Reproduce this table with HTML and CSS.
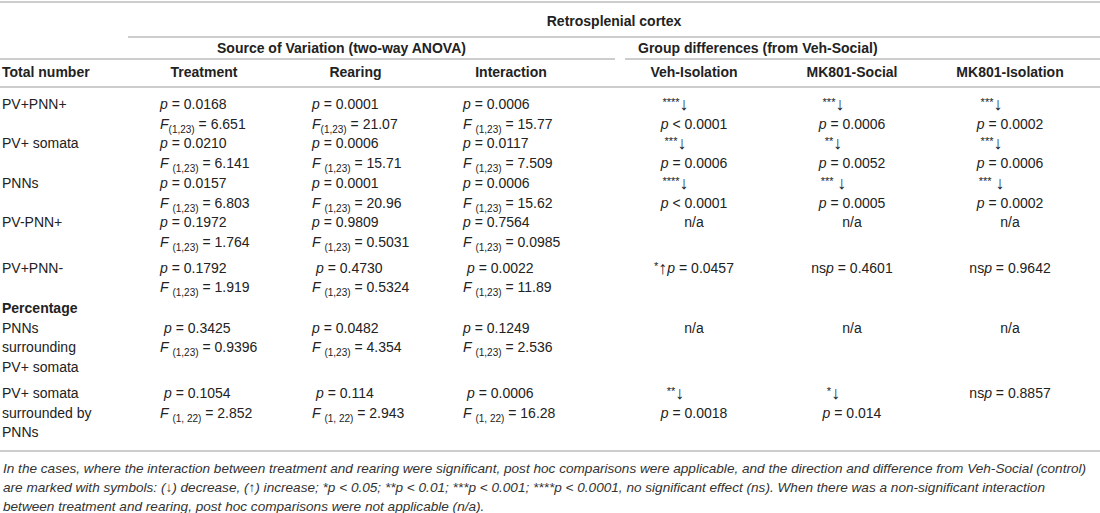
FILE: index.html
```html
<!DOCTYPE html>
<html lang="en">
<head>
<meta charset="utf-8">
<title>Retrosplenial cortex</title>
<link rel="stylesheet" href="styles.css">
</head>
<body>
<div class="page">
<table class="stats">
  <colgroup>
    <col class="c-label"><col class="c-treat"><col class="c-rear"><col class="c-inter">
    <col class="c-veh"><col class="c-mks"><col class="c-mki">
  </colgroup>
  <thead>
    <tr class="h1">
      <th></th>
      <th colspan="6" class="region">Retrosplenial cortex</th>
    </tr>
    <tr class="h2">
      <th class="rule-cell"></th>
      <th colspan="3" class="grp-cell"><div class="grp grp-src">Source of Variation (two-way ANOVA)</div></th>
      <th colspan="3" class="grp-cell"><div class="grp grp-diff">Group differences (from Veh-Social)</div></th>
    </tr>
    <tr class="h3">
      <th class="lab">Total number</th>
      <th>Treatment</th>
      <th>Rearing</th>
      <th class="inter">Interaction</th>
      <th>Veh-Isolation</th>
      <th>MK801-Social</th>
      <th class="last">MK801-Isolation</th>
    </tr>
  </thead>
  <tbody>
    <tr class="r-first">
      <td class="lab">PV+PNN+</td>
      <td class="num"><span class="ln"><i>p</i> = 0.0168</span><span class="ln"><i>F</i><sub>(1,23)</sub> = 6.651</span></td>
      <td class="num"><span class="ln"><i>p</i> = 0.0001</span><span class="ln"><i>F</i><sub>(1,23)</sub> = 21.07</span></td>
      <td class="num"><span class="ln"><i>p</i> = 0.0006</span><span class="ln"><i>F</i> <sub>(1,23)</sub> = 15.77</span></td>
      <td class="cmp"><span class="ln st"><span class="stars">****</span><span class="arr">↓</span></span><span class="ln"><i>p</i> &lt; 0.0001</span></td>
      <td class="cmp"><span class="ln st"><span class="stars">***</span><span class="arr">↓</span></span><span class="ln"><i>p</i> = 0.0006</span></td>
      <td class="cmp last"><span class="ln st"><span class="stars">***</span><span class="arr">↓</span></span><span class="ln"><i>p</i> = 0.0002</span></td>
    </tr>
    <tr>
      <td class="lab">PV+ somata</td>
      <td class="num"><span class="ln"><i>p</i> = 0.0210</span><span class="ln"><i>F</i> <sub>(1,23)</sub> = 6.141</span></td>
      <td class="num"><span class="ln"><i>p</i> = 0.0006</span><span class="ln"><i>F</i> <sub>(1,23)</sub> = 15.71</span></td>
      <td class="num"><span class="ln"><i>p</i> = 0.0117</span><span class="ln"><i>F</i> <sub>(1,23)</sub> = 7.509</span></td>
      <td class="cmp"><span class="ln st"><span class="stars">***</span><span class="arr">↓</span></span><span class="ln"><i>p</i> = 0.0006</span></td>
      <td class="cmp"><span class="ln st"><span class="stars">**</span><span class="arr">↓</span></span><span class="ln"><i>p</i> = 0.0052</span></td>
      <td class="cmp last"><span class="ln st"><span class="stars">***</span><span class="arr">↓</span></span><span class="ln"><i>p</i> = 0.0006</span></td>
    </tr>
    <tr>
      <td class="lab">PNNs</td>
      <td class="num"><span class="ln"><i>p</i> = 0.0157</span><span class="ln"><i>F</i> <sub>(1,23)</sub> = 6.803</span></td>
      <td class="num"><span class="ln"><i>p</i> = 0.0001</span><span class="ln"><i>F</i> <sub>(1,23)</sub> = 20.96</span></td>
      <td class="num"><span class="ln"><i>p</i> = 0.0006</span><span class="ln"><i>F</i> <sub>(1,23)</sub> = 15.62</span></td>
      <td class="cmp"><span class="ln st"><span class="stars">****</span><span class="arr">↓</span></span><span class="ln"><i>p</i> &lt; 0.0001</span></td>
      <td class="cmp"><span class="ln st"><span class="stars">***</span> <span class="arr">↓</span></span><span class="ln"><i>p</i> = 0.0005</span></td>
      <td class="cmp last"><span class="ln st"><span class="stars">***</span> <span class="arr">↓</span></span><span class="ln"><i>p</i> = 0.0002</span></td>
    </tr>
    <tr>
      <td class="lab">PV-PNN+</td>
      <td class="num"><span class="ln"><i>p</i> = 0.1972</span><span class="ln"><i>F</i> <sub>(1,23)</sub> = 1.764</span></td>
      <td class="num"><span class="ln"><i>p</i> = 0.9809</span><span class="ln"><i>F</i> <sub>(1,23)</sub> = 0.5031</span></td>
      <td class="num"><span class="ln"><i>p</i> = 0.7564</span><span class="ln"><i>F</i> <sub>(1,23)</sub> = 0.0985</span></td>
      <td class="cmp"><span class="ln">n/a</span></td>
      <td class="cmp"><span class="ln">n/a</span></td>
      <td class="cmp last"><span class="ln">n/a</span></td>
    </tr>
    <tr class="r-gap">
      <td class="lab">PV+PNN-</td>
      <td class="num"><span class="ln"><i>p</i> = 0.1792</span><span class="ln"><i>F</i> <sub>(1,23)</sub> = 1.919</span></td>
      <td class="num"><span class="ln ind"><i>p</i> = 0.4730</span><span class="ln"><i>F</i> <sub>(1,23)</sub> = 0.5324</span></td>
      <td class="num"><span class="ln ind"><i>p</i> = 0.0022</span><span class="ln"><i>F</i> <sub>(1,23)</sub> = 11.89</span></td>
      <td class="cmp"><span class="ln"><span class="stars">*</span><span class="arr">↑</span><i>p</i> = 0.0457</span></td>
      <td class="cmp"><span class="ln">ns<i>p</i> = 0.4601</span></td>
      <td class="cmp last"><span class="ln">ns<i>p</i> = 0.9642</span></td>
    </tr>
    <tr class="r-sect">
      <td class="lab sect">Percentage</td>
      <td></td><td></td><td></td><td></td><td></td><td class="last"></td>
    </tr>
    <tr>
      <td class="lab">PNNs<br>surrounding<br>PV+ somata</td>
      <td class="num"><span class="ln ind"><i>p</i> = 0.3425</span><span class="ln"><i>F</i> <sub>(1,23)</sub> = 0.9396</span></td>
      <td class="num"><span class="ln"><i>p</i> = 0.0482</span><span class="ln"><i>F</i> <sub>(1,23)</sub> = 4.354</span></td>
      <td class="num"><span class="ln"><i>p</i> = 0.1249</span><span class="ln"><i>F</i> <sub>(1,23)</sub> = 2.536</span></td>
      <td class="cmp"><span class="ln">n/a</span></td>
      <td class="cmp"><span class="ln">n/a</span></td>
      <td class="cmp last"><span class="ln">n/a</span></td>
    </tr>
    <tr class="r-gap r-last">
      <td class="lab">PV+ somata<br>surrounded by<br>PNNs</td>
      <td class="num"><span class="ln ind"><i>p</i> = 0.1054</span><span class="ln"><i>F</i> <sub>(1, 22)</sub> = 2.852</span></td>
      <td class="num"><span class="ln ind"><i>p</i> = 0.114</span><span class="ln"><i>F</i> <sub>(1, 22)</sub> = 2.943</span></td>
      <td class="num"><span class="ln ind"><i>p</i> = 0.0006</span><span class="ln"><i>F</i> <sub>(1, 22)</sub> = 16.28</span></td>
      <td class="cmp"><span class="ln st"><span class="stars">**</span><span class="arr">↓</span></span><span class="ln"><i>p</i> = 0.0018</span></td>
      <td class="cmp"><span class="ln st"><span class="stars">*</span><span class="arr">↓</span></span><span class="ln"><i>p</i> = 0.014</span></td>
      <td class="cmp last"><span class="ln">ns<i>p</i> = 0.8857</span></td>
    </tr>
  </tbody>
</table>
<p class="note">
  <span class="nl">In the cases, where the interaction between treatment and rearing were significant, post hoc comparisons were applicable, and the direction and difference from Veh-Social (control)</span>
  <span class="nl">are marked with symbols: (↓) decrease, (↑) increase; *p &lt; 0.05; **p &lt; 0.01; ***p &lt; 0.001; ****p &lt; 0.0001, no significant effect (ns). When there was a non-significant interaction</span>
  <span class="nl">between treatment and rearing, post hoc comparisons were not applicable (n/a).</span>
</p>
</div>
</body>
</html>
```

FILE: styles.css
```css
html, body {
  margin: 0;
  padding: 0;
  background: #ffffff;
}

body {
  font-family: "Liberation Sans", Arial, Helvetica, sans-serif;
  color: #222222;
}

.page {
  width: 1100px;
  padding-top: 1px;
}

.stats {
  width: 1100px;
  table-layout: fixed;
  border-collapse: separate;
  border-spacing: 0;
  border-top: 2px solid #cdcdcd;
  font-size: 14px;
  line-height: 19.7px;
}

.c-label { width: 128px; }
.c-treat { width: 152px; }
.c-rear  { width: 151px; }
.c-inter { width: 184px; }
.c-veh   { width: 158px; }
.c-mks   { width: 158px; }
.c-mki   { width: 169px; }

th {
  font-weight: bold;
  text-align: center;
  padding: 0;
  line-height: 20px;
}

td {
  padding: 0;
  vertical-align: top;
}

/* header row 1 */
.h1 th {
  padding-top: 8px;
  padding-bottom: 5px;
}

.h1 .region {
  border-bottom: 2px solid #cdcdcd;
}

/* header row 2 */
.h2 th {
  padding: 0;
  vertical-align: bottom;
}

.h2 .rule-cell {
  border-bottom: 2px solid #cdcdcd;
}

.grp {
  text-align: left;
  border-bottom: 2px solid #cdcdcd;
}

.grp-src {
  padding-left: 89px;
}

.grp-diff {
  margin-left: 10px;
  padding-left: 13px;
}

/* header row 3 */
.h3 th {
  padding-top: 2px;
  padding-bottom: 4px;
  border-bottom: 2px solid #cdcdcd;
}

.h3 th.lab {
  text-align: left;
  padding-left: 2px;
}

.h3 th.inter {
  padding-right: 24px;
}

.h3 th.last {
  padding-right: 11px;
}

/* body */
.lab {
  text-align: left;
  padding-left: 2px;
  padding-right: 20px;
}

.sect {
  font-weight: bold;
}

.num {
  text-align: left;
  padding-left: 32px;
  white-space: nowrap;
}

.cmp {
  text-align: center;
  white-space: nowrap;
}

.cmp.last {
  padding-right: 11px;
}

.ln {
  display: block;
}

.ln.ind {
  padding-left: 4px;
}

.ln.st {
  padding-right: 37px;
}

.stars {
  font-size: 11px;
  vertical-align: 3px;
  line-height: 0;
}

.arr {
  font-size: 18px;
  line-height: 0;
  vertical-align: -1px;
}

i {
  font-style: italic;
}

sub {
  font-size: 10px;
  line-height: 0;
  vertical-align: -4px;
}

.r-first td {
  padding-top: 7px;
}

.r-gap td {
  padding-top: 6px;
}

.r-sect td {
  padding-top: 1px;
}

.r-last td {
  padding-bottom: 7px;
  border-bottom: 2px solid #cdcdcd;
}

/* footnote */
.note {
  margin: 7px 0 0 3px;
  font-size: 13.6px;
  line-height: 19.2px;
  font-style: italic;
  color: #333333;
}

.nl {
  display: block;
  white-space: nowrap;
}
```
